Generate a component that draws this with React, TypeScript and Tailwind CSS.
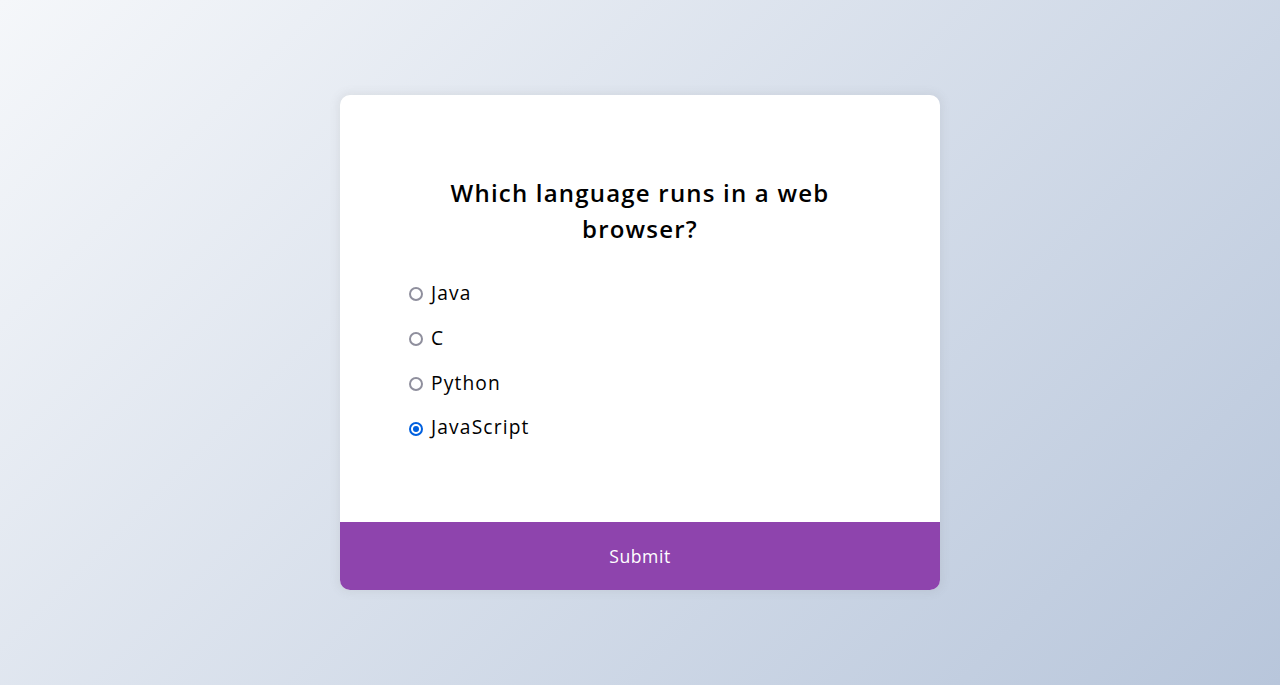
import React, { useState } from "react";

const options = [
  { id: "a", label: "Java" },
  { id: "b", label: "C" },
  { id: "c", label: "Python" },
  { id: "d", label: "JavaScript" },
];

export default function App() {
  const [sel, setSel] = useState("d");
  return (
    <div
      className="flex h-[685px] w-full items-center justify-center bg-[linear-gradient(135deg,#f5f7fa_0%,#b8c6db_100%)]"
      style={{ fontFamily: '"Open Sans", "Noto Sans", sans-serif' }}
    >
      <div className="w-[600px] overflow-hidden rounded-[10px] bg-white shadow-[0_0_10px_2px_rgba(100,100,100,0.1)]">
        <div className="p-16">
          <h2 className="m-0 p-4 text-center text-[24px] font-semibold leading-[36px] tracking-[0.05em] text-black">
            Which language runs in a web browser?
          </h2>
          <ul className="m-0 list-none p-0">
            {options.map((o) => (
              <li key={o.id} className="my-4 text-[19.2px] leading-[28.8px] tracking-[0.06em] text-black">
                <label htmlFor={o.id} className="flex cursor-pointer items-center">
                  <input
                    type="radio"
                    name="answer"
                    id={o.id}
                    checked={sel === o.id}
                    onChange={() => setSel(o.id)}
                    className="sr-only"
                  />
                  <span
                    className={
                      sel === o.id
                        ? "ml-[5px] mr-[8px] mt-[2px] flex h-[14px] w-[14px] shrink-0 items-center justify-center rounded-full border-2 border-[#0060df] bg-white"
                        : "ml-[5px] mr-[8px] mt-[2px] flex h-[14px] w-[14px] shrink-0 items-center justify-center rounded-full border-2 border-[#8f8f9d] bg-white"
                    }
                  >
                    {sel === o.id && <span className="h-[6px] w-[6px] rounded-full bg-[#0060df]" />}
                  </span>
                  {o.label}
                </label>
              </li>
            ))}
          </ul>
        </div>
        <button className="block w-full cursor-pointer border-none bg-[#8e44ad] p-[20.8px] text-[17.6px] leading-[26.4px] tracking-[0.03em] text-white">
          Submit
        </button>
      </div>
    </div>
  );
}
